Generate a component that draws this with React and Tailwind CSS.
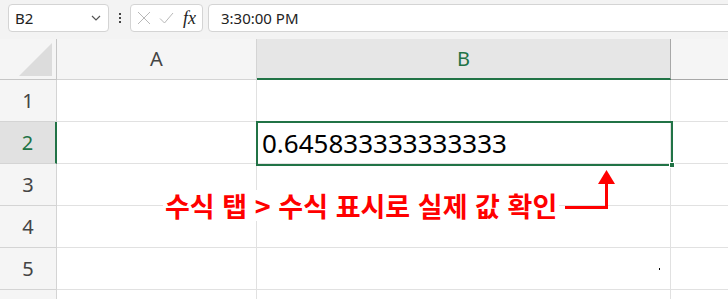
import { useMemo } from "react";

const FONT = { fontFamily: '"Noto Sans", "Open Sans", sans-serif' };
const KR = { fontFamily: '"Noto Sans CJK KR", "Noto Sans", sans-serif' };

const ROWS = [1, 2, 3, 4, 5, 6];

function FormulaBar() {
  return (
    <div className="flex items-start h-[39px] bg-[#f3f3f3] pt-[4px]">
      {/* name box */}
      <div className="ml-[8px] flex items-center justify-between w-[101px] h-[28px] rounded-[4px] border border-[#d4d4d4] bg-white pl-[6px] pr-[6px]">
        <span className="text-[15px] text-[#222]">B2</span>
        <svg width="10" height="6" viewBox="0 0 10 6" className="mr-[1px]">
          <path d="M1 1l4 4 4-4" fill="none" stroke="#555" strokeWidth="1.2" />
        </svg>
      </div>
      {/* ellipsis */}
      <div className="flex flex-col items-center justify-center gap-[2px] w-[21px] h-[28px]">
        <span className="block w-[2px] h-[2px] bg-[#444]" />
        <span className="block w-[2px] h-[2px] bg-[#444]" />
        <span className="block w-[2px] h-[2px] bg-[#444]" />
      </div>
      {/* cancel / enter / fx */}
      <div className="flex items-center w-[73px] h-[28px] rounded-[4px] border border-[#d4d4d4] bg-white">
        <svg width="14" height="14" viewBox="0 0 14 14" className="ml-[6px]">
          <path d="M1 1l12 12M13 1L1 13" stroke="#b8b8b8" strokeWidth="1" fill="none" />
        </svg>
        <svg width="15" height="12" viewBox="0 0 15 12" className="ml-[8px]">
          <path d="M1 6.5l4.5 4.5L14 1" stroke="#b8b8b8" strokeWidth="1" fill="none" />
        </svg>
        <span
          className="ml-[9px] text-[18px] italic text-[#222] leading-none"
          style={{ fontFamily: '"Liberation Serif", serif' }}
        >
          fx
        </span>
      </div>
      {/* formula input */}
      <div className="ml-[5px] flex-1 -mr-[4px] flex items-center h-[28px] rounded-[4px] border border-[#d4d4d4] bg-white pl-[12px]">
        <span className="text-[15px] text-[#222]">3:30:00 PM</span>
      </div>
    </div>
  );
}

function HeaderRow() {
  return (
    <div className="grid grid-cols-[57px_200px_414px_1fr] h-[41px]">
      <div className="relative bg-[#f5f5f5] border-r border-[#c6c6c6] border-b border-[#bdbdbd]">
        <svg width="34" height="33" viewBox="0 0 34 33" className="absolute left-[19px] top-[4px]">
          <path d="M33 0V33H0Z" fill="#dcdcdc" />
        </svg>
      </div>
      <div className="flex items-center justify-center bg-[#f5f5f5] border-r border-[#d4d4d4] border-b border-[#bdbdbd] text-[20px] text-[#444]">
        A
      </div>
      <div className="flex items-center justify-center bg-[#e6e6e6] border-r border-[#a8a8a8] border-b-2 border-b-[#217346] text-[20px] text-[#217346]">
        B
      </div>
      <div className="bg-[#f5f5f5] border-b border-[#a8a8a8]" />
    </div>
  );
}

function Row({ n }) {
  const active = n === 2;
  // the last row is cut by the window; its number sits below the edge
  const label = n <= 5 ? n : "";
  return (
    <div className="grid grid-cols-[57px_200px_414px_1fr] h-[42px]">
      <div
        className={
          active
            ? "flex items-center justify-center bg-[#e1e1e1] border-r-2 border-r-[#217346] border-b border-[#d4d4d4] text-[20px] text-[#217346]"
            : "flex items-center justify-center bg-[#f5f5f5] border-r border-[#c6c6c6] border-b border-[#d4d4d4] text-[20px] text-[#444]"
        }
      >
        {label}
      </div>
      <div className="border-r border-b border-[#e1e1e1] bg-white" />
      <div className="flex items-center border-r border-b border-[#e1e1e1] bg-white pl-[5px]">
        {active && (
          <span className="text-[26px] text-black leading-none">0.645833333333333</span>
        )}
      </div>
      <div className="border-b border-[#e1e1e1] bg-white" />
    </div>
  );
}

export default function App() {
  const rows = useMemo(() => ROWS, []);

  return (
    <div className="relative w-[728px] h-[299px] overflow-hidden bg-white" style={FONT}>
      <FormulaBar />
      <HeaderRow />
      {rows.map((n) => (
        <Row key={n} n={n} />
      ))}

      {/* active cell outline + fill handle */}
      <div className="absolute left-[256px] top-[121px] w-[417px] h-[45px] border-2 border-[#217346] pointer-events-none" />
      <div className="absolute left-[669px] top-[162px] w-[6px] h-[6px] bg-[#217346] border border-white" />

      {/* annotation */}
      <div
        className="absolute left-[163px] top-[190px] bg-white px-[2px] text-[27px] font-bold text-[#ff0000] leading-[31px] whitespace-nowrap [word-spacing:1.5px]"
        style={KR}
      >
        수식 탭 &gt; 수식 표시로 실제 값 확인
      </div>
      <svg width="60" height="45" viewBox="0 0 60 45" className="absolute left-[562px] top-[168px]">
        <path d="M3 39.5H44.5V14" stroke="#ff0000" strokeWidth="3" fill="none" />
        <path d="M36 16L44.5 2L53 16Z" fill="#ff0000" />
      </svg>

      <span className="absolute left-[659px] top-[268px] w-[1px] h-[2px] bg-black" />
    </div>
  );
}
